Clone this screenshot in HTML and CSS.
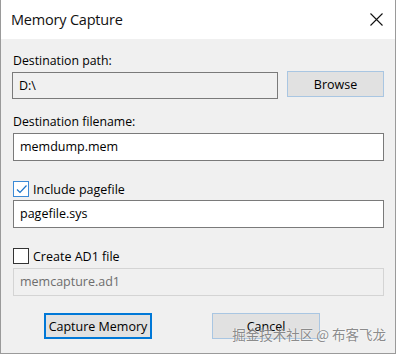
FILE: index.html
```html
<!DOCTYPE html>
<html lang="en">
<head>
    <meta charset="UTF-8">
    <meta name="viewport" content="width=device-width, initial-scale=1.0">
    <title>Memory Capture</title>
    <link rel="stylesheet" href="styles.css">
</head>
<body>
    <div class="window">
        <div class="titlebar">
            <span class="title">Memory Capture</span>
            <svg class="close" width="13" height="13" viewBox="0 0 13 13">
                <path d="M0.5 0.5 L12.5 12.5 M12.5 0.5 L0.5 12.5" stroke="#111" stroke-width="1.1" fill="none"/>
            </svg>
        </div>

        <div class="content">
            <div class="label first">Destination path:</div>
            <div class="path-row">
                <div class="field readonly path">D:\</div>
                <button class="btn browse" type="button">Browse</button>
            </div>

            <div class="label second">Destination filename:</div>
            <div class="field">memdump.mem</div>

            <label class="check-row">
                <span class="box checked">
                    <svg width="13" height="13" viewBox="0 0 13 13">
                        <path d="M2 6.5 L5 9.5 L11.5 2.5" stroke="#1a73c8" stroke-width="1.2" fill="none"/>
                    </svg>
                </span>
                Include pagefile
            </label>
            <div class="field">pagefile.sys</div>

            <label class="check-row">
                <span class="box"></span>
                Create AD1 file
            </label>
            <div class="field disabled last">memcapture.ad1</div>

            <div class="buttons">
                <button class="btn default" type="button">Capture Memory</button>
                <button class="btn cancel" type="button">Cancel</button>
            </div>
        </div>

        <div class="watermark">掘金技术社区 @ 布客飞龙</div>
    </div>
</body>
</html>
```

FILE: styles.css
```css
:root {
    --body: #f0f0f0;
    --field-border: #7a7a7a;
    --btn: #e1e1e1;
    --accent: #0078d7;
}

* {
    margin: 0;
    padding: 0;
    box-sizing: border-box;
}

body {
    font-family: 'Open Sans', 'Noto Sans', sans-serif;
    font-size: 12px;
    color: #000;
    background: #fff;
}

.window {
    position: relative;
    width: 396px;
    height: 354px;
    border: 1px solid #9a9a9a;
    border-top: none;
    background: var(--body);
    overflow: hidden;
}

.titlebar {
    height: 39px;
    background: #fff;
    display: flex;
    align-items: center;
    justify-content: space-between;
    padding: 0 12px 0 10px;
}

.title {
    font-size: 14.5px;
    color: #111;
    letter-spacing: -0.2px;
}

.close {
    display: block;
}

.content {
    padding: 0 11px 0 12px;
}

.label {
    height: 16px;
    line-height: 16px;
    margin-bottom: 3px;
    font-size: 12.3px;
}

.label.first {
    margin-top: 14px;
}

.label.second {
    margin-top: 15px;
}

.path-row {
    display: flex;
    align-items: flex-start;
    gap: 9px;
}

.field {
    height: 28px;
    line-height: 26px;
    padding-left: 6px;
    background: #fff;
    border: 1px solid var(--field-border);
    font-size: 12.5px;
}

.field.path {
    flex: 0 0 266px;
    height: 27px;
    margin-left: -1px;
}

.field.readonly {
    background: var(--body);
}

.field.disabled {
    background: var(--body);
    border-color: #d4d4d4;
    color: #6d6d6d;
    margin-top: 4px;
}

.check-row {
    display: flex;
    align-items: center;
    gap: 4px;
    height: 16px;
    margin-top: 20px;
    margin-bottom: 3px;
    font-size: 12.5px;
}

.box {
    width: 16px;
    height: 16px;
    border: 1px solid #333;
    background: #fff;
    display: flex;
    align-items: center;
    justify-content: center;
}

.box.checked {
    border-color: #3b8ad6;
}

.btn {
    font-family: inherit;
    font-size: 12.5px;
    color: #000;
    background: var(--btn);
    border: 1px solid #adadad;
    height: 26px;
    width: 108px;
}

.btn.browse {
    width: 97px;
    margin-top: -1px;
    border-color: #a9c6e2;
}

.buttons {
    display: flex;
    gap: 60px;
    margin-top: 17px;
    padding-left: 31px;
}

.btn.default {
    border: 2px solid var(--accent);
}

.btn.cancel {
    border-color: #a9c6e2;
}

.watermark {
    position: absolute;
    right: 9px;
    bottom: 9px;
    font-family: 'Noto Sans CJK SC', sans-serif;
    font-size: 13.5px;
    color: rgba(110, 110, 110, 0.8);
    text-shadow: 0 0 2px #fff;
}
```
